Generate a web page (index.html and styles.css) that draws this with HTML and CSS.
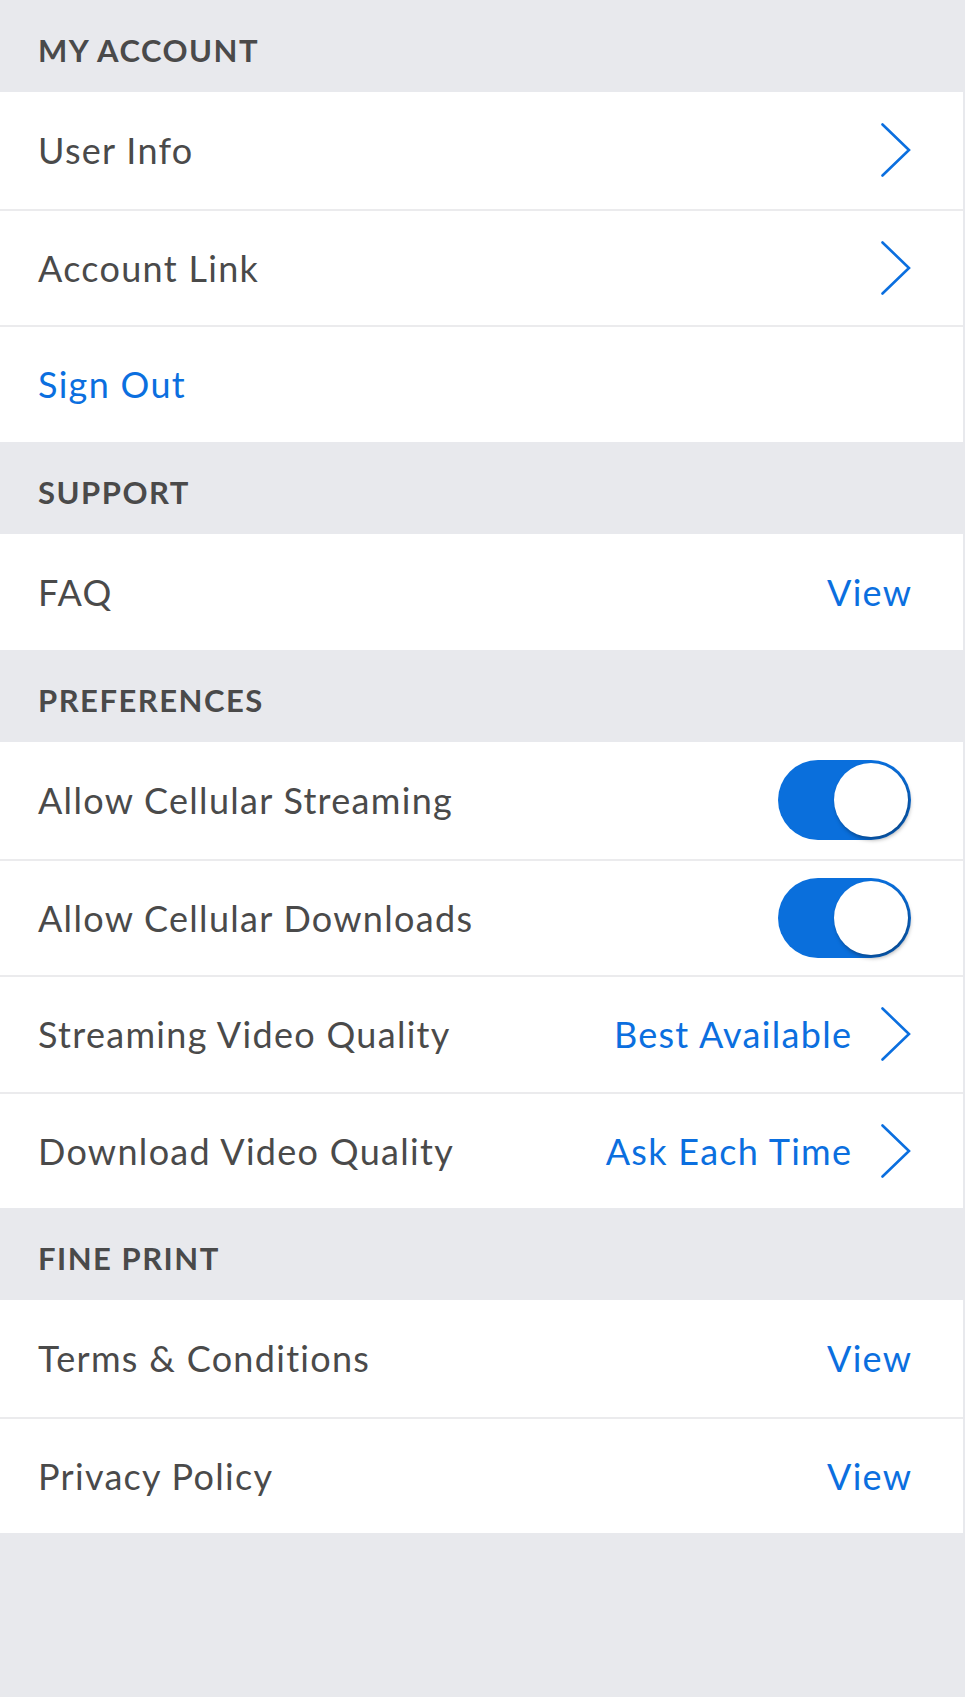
FILE: index.html
```html
<!DOCTYPE html>
<html lang="en">
<head>
<meta charset="utf-8">
<title>Settings</title>
<link rel="stylesheet" href="styles.css">
</head>
<body>
<main class="settings">
  <section class="group">
    <h2 class="group-title">MY ACCOUNT</h2>
    <div class="row"><span class="label">User Info</span><span class="trail"><svg class="chev" viewBox="0 0 30 54"><polyline points="1.5,1.5 28,27 1.5,52.5"/></svg></span></div>
    <div class="row"><span class="label">Account Link</span><span class="trail"><svg class="chev" viewBox="0 0 30 54"><polyline points="1.5,1.5 28,27 1.5,52.5"/></svg></span></div>
    <div class="row"><span class="label link">Sign Out</span></div>
  </section>
  <section class="group">
    <h2 class="group-title">SUPPORT</h2>
    <div class="row"><span class="label">FAQ</span><span class="trail"><span class="value">View</span></span></div>
  </section>
  <section class="group">
    <h2 class="group-title">PREFERENCES</h2>
    <div class="row"><span class="label">Allow Cellular Streaming</span><span class="trail"><span class="toggle on"><span class="knob"></span></span></span></div>
    <div class="row"><span class="label">Allow Cellular Downloads</span><span class="trail"><span class="toggle on"><span class="knob"></span></span></span></div>
    <div class="row"><span class="label">Streaming Video Quality</span><span class="trail"><span class="value">Best Available</span><svg class="chev" viewBox="0 0 30 54"><polyline points="1.5,1.5 28,27 1.5,52.5"/></svg></span></div>
    <div class="row"><span class="label">Download Video Quality</span><span class="trail"><span class="value">Ask Each Time</span><svg class="chev" viewBox="0 0 30 54"><polyline points="1.5,1.5 28,27 1.5,52.5"/></svg></span></div>
  </section>
  <section class="group">
    <h2 class="group-title">FINE PRINT</h2>
    <div class="row"><span class="label">Terms &amp; Conditions</span><span class="trail"><span class="value">View</span></span></div>
    <div class="row"><span class="label">Privacy Policy</span><span class="trail"><span class="value">View</span></span></div>
  </section>
</main>
</body>
</html>
```

FILE: styles.css
```css
html, body {
  margin: 0;
  padding: 0;
}
body {
  background: #e8e9ed;
  font-family: Lato, "Noto Sans", sans-serif;
  color: #4a4a4a;
  min-height: 1697px;
}
.settings {
  display: flex;
  flex-direction: column;
  padding-right: 2px;
}
.group {
  display: flex;
  flex-direction: column;
}
.group-title {
  margin: 0;
  height: 92px;
  box-sizing: border-box;
  padding: 8px 0 0 38px;
  display: flex;
  align-items: center;
  font-size: 31px;
  font-weight: 700;
  color: #4a4a4a;
  letter-spacing: 1.5px;
}
.row {
  height: 116.5px;
  box-sizing: border-box;
  background: #fff;
  display: flex;
  align-items: center;
  justify-content: space-between;
  padding: 0 52px 0 38px;
  font-size: 36px;
  letter-spacing: 1.3px;
}
.row + .row {
  border-top: 2px solid #ebebed;
}
.label {
  color: #4a4a4a;
}
.link, .value {
  color: #0b6fdf;
}
.value {
  margin-right: -1.3px;
}
.trail {
  display: flex;
  align-items: center;
  gap: 30px;
}
.chev {
  width: 30px;
  height: 54px;
  display: block;
}
.chev polyline {
  fill: none;
  stroke: #0b6fdf;
  stroke-width: 2.6;
  stroke-linecap: round;
  stroke-linejoin: miter;
}
.toggle {
  width: 133px;
  height: 80px;
  border-radius: 40px;
  background: #0a6fdc;
  box-sizing: border-box;
  padding: 3px;
  display: flex;
  justify-content: flex-end;
  align-items: center;
}
.knob {
  width: 74px;
  height: 74px;
  border-radius: 50%;
  background: #fff;
  box-shadow: 2px 3px 4px rgba(0, 0, 0, 0.35);
}
```
